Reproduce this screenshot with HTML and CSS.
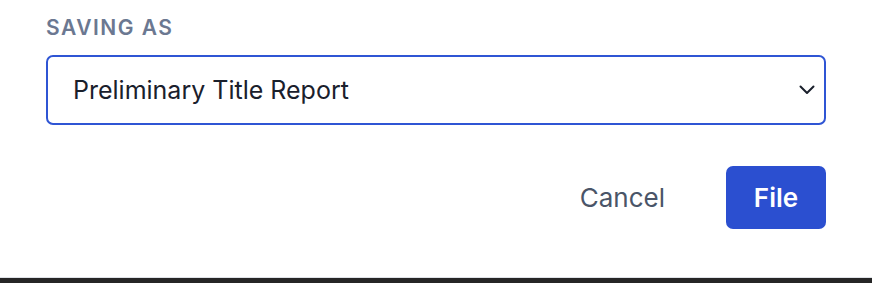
FILE: index.html
```html
<!DOCTYPE html>
<html lang="en">
<head>
  <meta charset="UTF-8">
  <title>Save document</title>
  <link rel="stylesheet" href="styles.css">
</head>
<body>
  <div class="dialog">
    <p class="field-label">Saving as</p>

    <div class="select">
      <span class="select-value">Preliminary Title Report</span>
      <svg class="chevron" width="16" height="10" viewBox="0 0 16 10">
        <path d="M1.5 1.5 L8 8 L14.5 1.5" fill="none" stroke="#1a202c" stroke-width="2" stroke-linecap="round" stroke-linejoin="round"/>
      </svg>
    </div>

    <div class="actions">
      <button class="btn btn-cancel">Cancel</button>
      <button class="btn btn-file">File</button>
    </div>
  </div>
</body>
</html>
```

FILE: styles.css
```css
html, body {
  margin: 0;
  padding: 0;
  background: #262626;
  font-family: Inter, "Noto Sans", sans-serif;
}
.dialog {
  background: #fff;
  height: 278px;
  box-sizing: border-box;
  border-bottom: 1px solid #dfe2e7;
  padding: 0 46px;
}
.field-label {
  margin: 0;
  padding-top: 16px;
  font-size: 21px;
  line-height: 24px;
  font-weight: 600;
  letter-spacing: 1.5px;
  text-transform: uppercase;
  color: #6b7891;
}
.select {
  margin-top: 15px;
  height: 70px;
  box-sizing: border-box;
  border: 2px solid #2f55d4;
  border-radius: 7px;
  display: flex;
  align-items: center;
  justify-content: space-between;
  padding: 0 9px 0 25px;
  font-size: 25px;
  color: #1a202c;
}
.actions {
  display: flex;
  justify-content: flex-end;
  align-items: center;
  gap: 41px;
  margin-top: 41px;
}
.btn {
  font-family: inherit;
  font-size: 26px;
  border: none;
  cursor: pointer;
}
.btn-cancel {
  background: none;
  color: #4a5568;
  padding: 0 20px;
  height: 63px;
}
.btn-file {
  width: 100px;
  height: 63px;
  border-radius: 7px;
  background: #2b4fd0;
  color: #fff;
  font-weight: 600;
}
```
